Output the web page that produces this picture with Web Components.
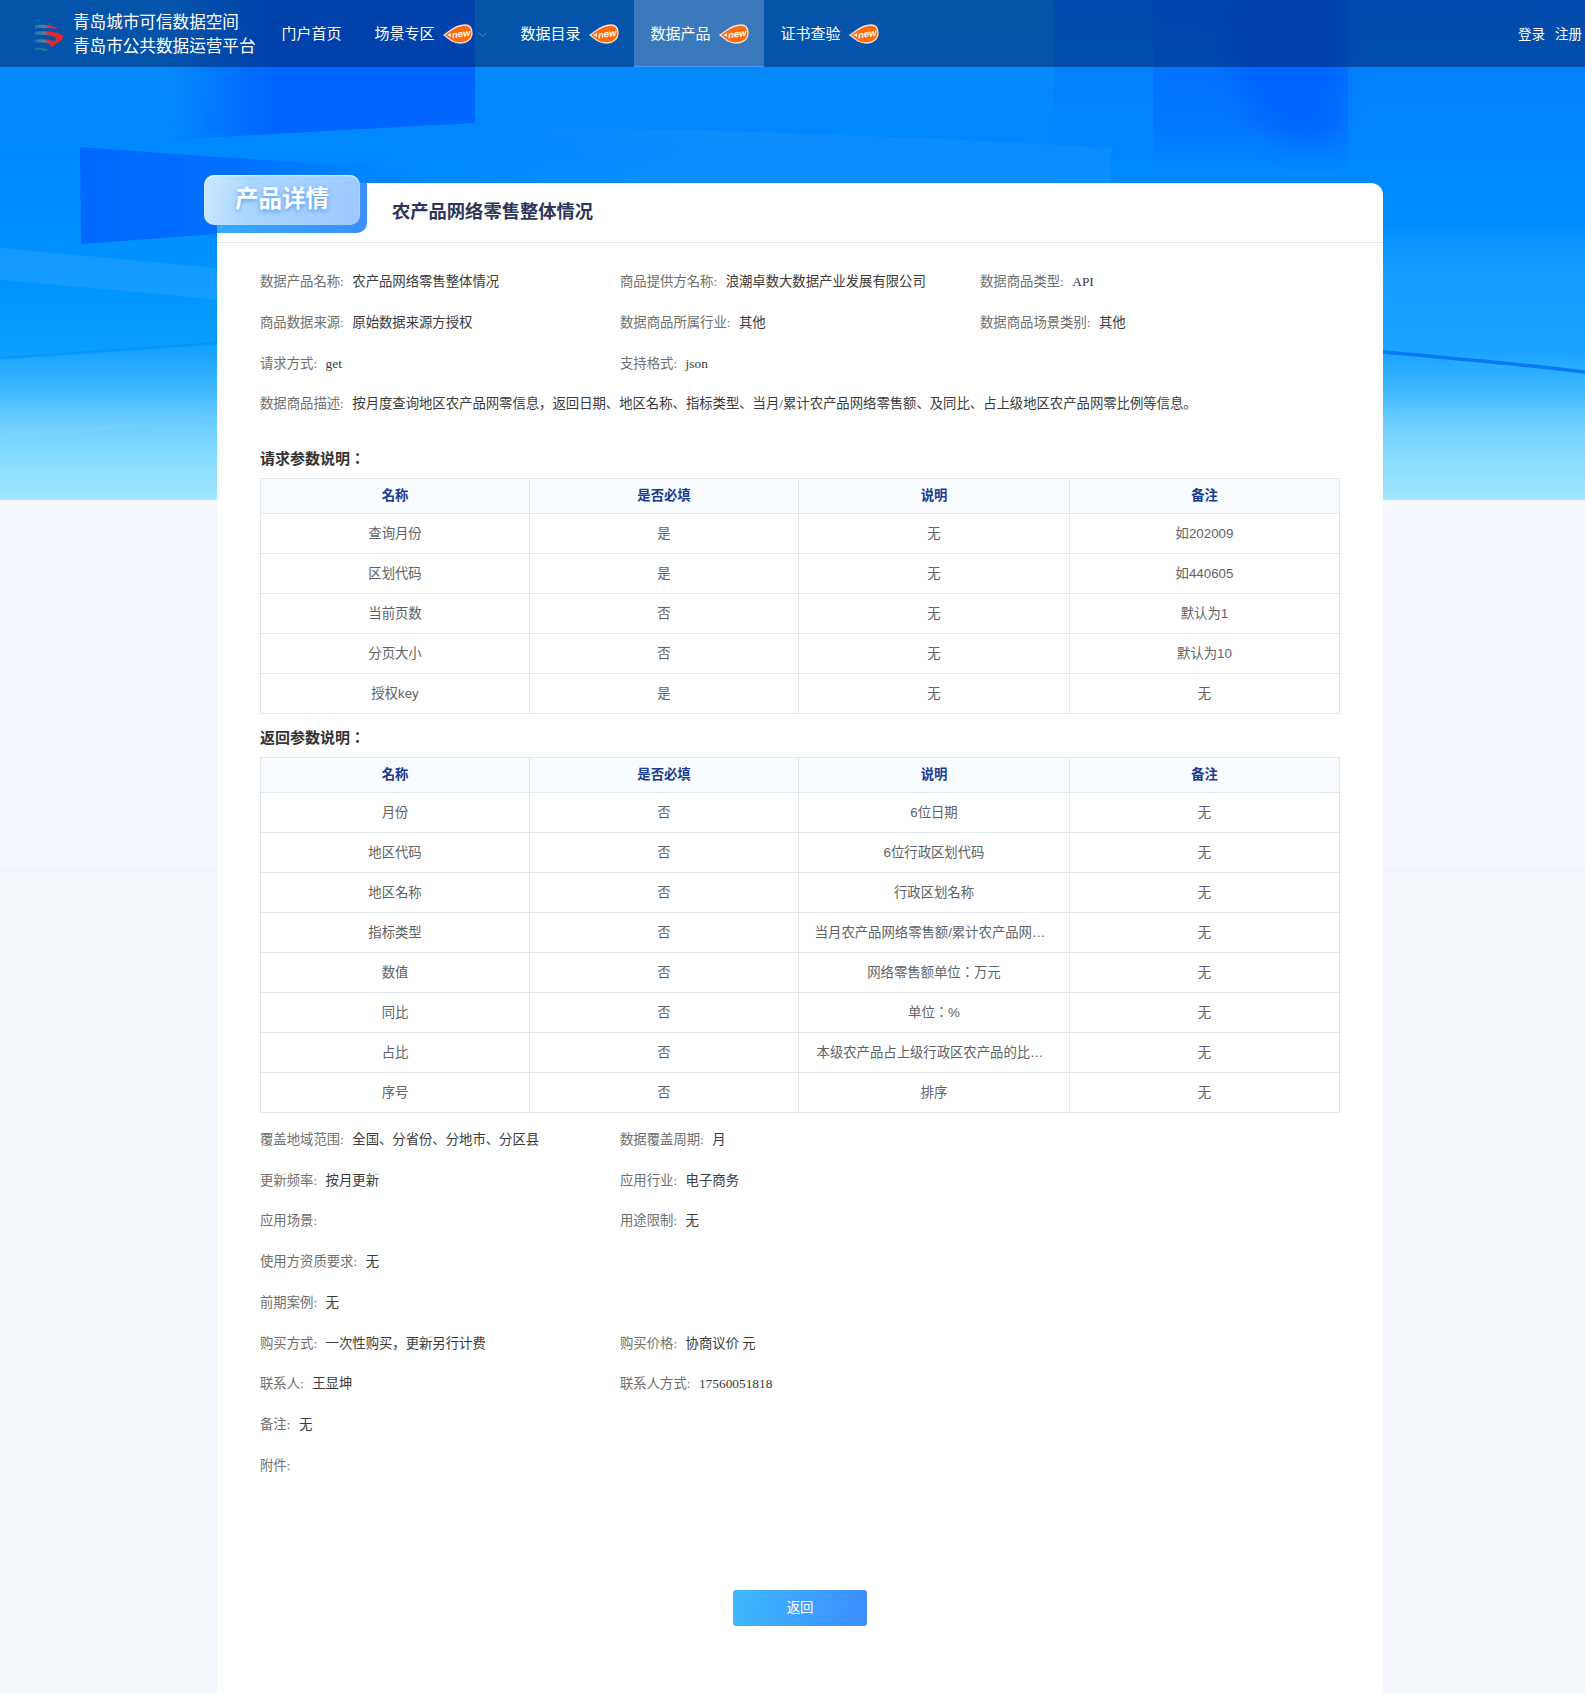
<!DOCTYPE html>
<html lang="ja">
<head>
<meta charset="utf-8">
<title>产品详情</title>
<style>
html,body{margin:0;padding:0;background:#f2f5f9;}
body{width:1585px;overflow-x:hidden;font-family:"Liberation Serif","Noto Sans CJK JP",serif;font-size:13.35px;}
</style>
</head>
<body>
<detail-page>
  <site-nav slot="nav">
    <nav-item>门户首页</nav-item>
    <nav-item badge chevron>场景专区</nav-item>
    <nav-item badge>数据目录</nav-item>
    <nav-item badge active>数据产品</nav-item>
    <nav-item badge>证书查验</nav-item>
  </site-nav>
  <detail-card tab="产品详情" heading="农产品网络零售整体情况">
    <info-grid>
      <info-field label="数据产品名称">农产品网络零售整体情况</info-field>
      <info-field label="商品提供方名称">浪潮卓数大数据产业发展有限公司</info-field>
      <info-field label="数据商品类型">API</info-field>
      <info-field label="商品数据来源">原始数据来源方授权</info-field>
      <info-field label="数据商品所属行业">其他</info-field>
      <info-field label="数据商品场景类别">其他</info-field>
      <info-field label="请求方式">get</info-field>
      <info-field label="支持格式">json</info-field>
      <info-field></info-field>
      <info-field wide label="数据商品描述">按月度查询地区农产品网零信息，返回日期、地区名称、指标类型、当月/累计农产品网络零售额、及同比、占上级地区农产品网零比例等信息。</info-field>
    </info-grid>
    <section-title first>请求参数说明：</section-title>
    <param-table>
      <param-row head><param-cell>名称</param-cell><param-cell>是否必填</param-cell><param-cell>说明</param-cell><param-cell>备注</param-cell></param-row>
      <param-row><param-cell>查询月份</param-cell><param-cell>是</param-cell><param-cell>无</param-cell><param-cell>如202009</param-cell></param-row>
      <param-row><param-cell>区划代码</param-cell><param-cell>是</param-cell><param-cell>无</param-cell><param-cell>如440605</param-cell></param-row>
      <param-row><param-cell>当前页数</param-cell><param-cell>否</param-cell><param-cell>无</param-cell><param-cell>默认为1</param-cell></param-row>
      <param-row><param-cell>分页大小</param-cell><param-cell>否</param-cell><param-cell>无</param-cell><param-cell>默认为10</param-cell></param-row>
      <param-row><param-cell>授权key</param-cell><param-cell>是</param-cell><param-cell>无</param-cell><param-cell>无</param-cell></param-row>
    </param-table>
    <section-title>返回参数说明：</section-title>
    <param-table>
      <param-row head><param-cell>名称</param-cell><param-cell>是否必填</param-cell><param-cell>说明</param-cell><param-cell>备注</param-cell></param-row>
      <param-row><param-cell>月份</param-cell><param-cell>否</param-cell><param-cell>6位日期</param-cell><param-cell>无</param-cell></param-row>
      <param-row><param-cell>地区代码</param-cell><param-cell>否</param-cell><param-cell>6位行政区划代码</param-cell><param-cell>无</param-cell></param-row>
      <param-row><param-cell>地区名称</param-cell><param-cell>否</param-cell><param-cell>行政区划名称</param-cell><param-cell>无</param-cell></param-row>
      <param-row><param-cell>指标类型</param-cell><param-cell>否</param-cell><param-cell clipped>当月农产品网络零售额/累计农产品网…</param-cell><param-cell>无</param-cell></param-row>
      <param-row><param-cell>数值</param-cell><param-cell>否</param-cell><param-cell>网络零售额单位：万元</param-cell><param-cell>无</param-cell></param-row>
      <param-row><param-cell>同比</param-cell><param-cell>否</param-cell><param-cell>单位：%</param-cell><param-cell>无</param-cell></param-row>
      <param-row><param-cell>占比</param-cell><param-cell>否</param-cell><param-cell clipped>本级农产品占上级行政区农产品的比…</param-cell><param-cell>无</param-cell></param-row>
      <param-row><param-cell>序号</param-cell><param-cell>否</param-cell><param-cell>排序</param-cell><param-cell>无</param-cell></param-row>
    </param-table>
    <info-grid after>
      <info-field label="覆盖地域范围">全国、分省份、分地市、分区县</info-field>
      <info-field label="数据覆盖周期">月</info-field>
      <info-field></info-field>
      <info-field label="更新频率">按月更新</info-field>
      <info-field label="应用行业">电子商务</info-field>
      <info-field></info-field>
      <info-field label="应用场景"></info-field>
      <info-field label="用途限制">无</info-field>
      <info-field></info-field>
      <info-field wide label="使用方资质要求">无</info-field>
      <info-field wide label="前期案例">无</info-field>
      <info-field label="购买方式">一次性购买，更新另行计费</info-field>
      <info-field label="购买价格">协商议价 元</info-field>
      <info-field></info-field>
      <info-field label="联系人">王显坤</info-field>
      <info-field label="联系人方式">17560051818</info-field>
      <info-field></info-field>
      <info-field wide label="备注">无</info-field>
      <info-field wide label="附件"></info-field>
    </info-grid>
    <back-button>返回</back-button>
  </detail-card>
</detail-page>

<script>
const CJK = '"Noto Sans CJK JP"';
function define(name, html, init) {
  customElements.define(name, class extends HTMLElement {
    constructor() {
      super();
      this.attachShadow({mode: 'open'}).innerHTML = typeof html === 'function' ? html(this) : html;
    }
    connectedCallback() { if (init) init(this); }
  });
}

define('detail-page', `
<style>
:host{display:block;position:relative;width:1585px;min-height:1693px;isolation:isolate;}
.backdrop{position:absolute;left:0;top:0;width:1585px;height:867px;z-index:-1;background:#f5f8fe;}
.backdrop svg{display:block;}
main{display:block;padding:116px 202px 0 217px;}
</style>
<div class="backdrop">
<svg width="1585" height="500" viewBox="0 0 1585 500" xmlns="http://www.w3.org/2000/svg">
  <defs>
    <linearGradient id="base" x1="0" y1="0" x2="0" y2="1">
      <stop offset="0" stop-color="#0a8af8"/>
      <stop offset=".3" stop-color="#0088ff"/>
      <stop offset=".56" stop-color="#0094ff"/>
      <stop offset=".7" stop-color="#0a9eff"/>
      <stop offset=".78" stop-color="#35b5ff"/>
      <stop offset=".855" stop-color="#6ecfff"/>
      <stop offset=".92" stop-color="#88dcff"/>
      <stop offset="1" stop-color="#a0e6ff"/>
    </linearGradient>
    <linearGradient id="rtint" x1="0" y1="0" x2="0" y2="1">
      <stop offset="0" stop-color="#0070ff" stop-opacity=".75"/>
      <stop offset=".45" stop-color="#0090ff" stop-opacity=".2"/>
      <stop offset=".6" stop-color="#ffffff" stop-opacity=".08"/>
      <stop offset="1" stop-color="#ffffff" stop-opacity="0"/>
    </linearGradient>
    <linearGradient id="strip" x1="0" y1="0" x2="0" y2="1">
      <stop offset="0" stop-color="#0062ff" stop-opacity=".5"/>
      <stop offset=".7" stop-color="#0062ff" stop-opacity=".4"/>
      <stop offset="1" stop-color="#0062ff" stop-opacity="0"/>
    </linearGradient>
    <linearGradient id="fadeL" x1="170" y1="0" x2="270" y2="0" gradientUnits="userSpaceOnUse">
      <stop offset="0" stop-color="#0066ff" stop-opacity="0"/>
      <stop offset="1" stop-color="#0066ff"/>
    </linearGradient>
    <linearGradient id="fadeB" x1="80" y1="0" x2="480" y2="0" gradientUnits="userSpaceOnUse">
      <stop offset="0" stop-color="#0068ff"/>
      <stop offset=".4" stop-color="#0070ff"/>
      <stop offset="1" stop-color="#0088ff" stop-opacity="0"/>
    </linearGradient>
    <linearGradient id="band" x1="380" y1="0" x2="700" y2="0" gradientUnits="userSpaceOnUse">
      <stop offset="0" stop-color="#fff" stop-opacity="0"/>
      <stop offset="1" stop-color="#fff" stop-opacity=".045"/>
    </linearGradient>
    <filter id="blur" x="-20%" y="-20%" width="140%" height="140%"><feGaussianBlur stdDeviation="12"/></filter>
  </defs>
  <rect width="1585" height="500" fill="url(#base)"/>
  <rect x="1054" width="531" height="500" fill="url(#rtint)"/>
  <polygon points="170,0 475,0 475,123 200,138 170,139" fill="url(#fadeL)"/>
  <polygon points="80,147 217,157 367,166 480,172 480,232 217,234 81,244" fill="url(#fadeB)"/>
  <path d="M380,125 C700,128 950,138 1111,148 L1111,183 L380,183Z" fill="url(#band)"/>
  <polygon points="0,248 217,268 217,300 160,294 0,280" fill="#fff" fill-opacity=".08"/>
  <rect x="1153" width="195" height="175" fill="url(#strip)"/>
  <path d="M1225,0 H1340 V120 C1335,150 1300,150 1270,130 C1245,112 1230,80 1225,0Z" fill="#005eff" fill-opacity=".7" filter="url(#blur)"/>
  <path d="M0,358 L217,343" stroke="#0a8cf5" stroke-width="2" fill="none" stroke-opacity=".6"/>
  <path d="M1383,352 C1450,358 1520,364 1585,372" stroke="#0a78f5" stroke-width="3.5" fill="none"/>
  <polygon points="0,360 217,345 217,420 0,440" fill="#fff" fill-opacity=".05"/>
</svg>
</div>
<slot name="nav"></slot>
<main><slot></slot></main>
`);

define('site-nav', `
<style>
:host{display:flex;align-items:center;height:67px;width:1585px;box-sizing:border-box;background:rgba(0,30,90,.5);color:#fff;font-family:${CJK},sans-serif;}
.brand{display:flex;align-items:center;width:264.5px;flex:none;padding-left:33px;box-sizing:border-box;height:100%;}
.brand svg{display:block;flex:none;margin-right:8px;}
.name{font-size:16.6px;line-height:24px;white-space:nowrap;margin-top:-1px;}
.items{display:flex;height:100%;}
.user{margin-left:auto;display:flex;gap:10px;font-size:13.5px;padding-right:3px;padding-bottom:2px;}
</style>
<div class="brand">
  <svg width="32" height="36" viewBox="33 14 32 36" xmlns="http://www.w3.org/2000/svg">
    <defs>
      <linearGradient id="rb" x1="35" y1="0" x2="50" y2="0" gradientUnits="userSpaceOnUse">
        <stop offset="0" stop-color="#1f9f98" stop-opacity=".5"/>
        <stop offset=".55" stop-color="#5a7fa0"/>
        <stop offset="1" stop-color="#e6282a"/>
      </linearGradient>
    </defs>
    <path d="M35 18 C38 17.4 41 17.8 43 19.2 C40.5 18.6 38 18.7 35 19Z" fill="#1d8a86" fill-opacity=".7"/>
    <path d="M35 23 C44 22.4 54 23 58.5 27.5 C54 25.8 45 25.6 35 26.4Z" fill="url(#rb)"/>
    <path d="M35 29.5 C47 28.8 60 29.5 63.5 34.8 C62 38.5 58 41 53 42.8 C56 39.5 57 37 54.5 35 C50 32.8 43 32.6 35 32.8Z" fill="url(#rb)"/>
    <path d="M35 37.5 C42 37 49 37.6 56.5 39.5 C55.5 42 54 44 51 45.4 C51 43 49 41.6 46 41 C42.5 40.4 39 40.4 35 40.5Z" fill="url(#rb)"/>
    <path d="M35 45.8 C39 45.4 44 46 48.5 47.8 C47 48.8 45.5 49 44 49 C43 47.6 39 47.4 35 47.5Z" fill="#1d8a86" fill-opacity=".8"/>
  </svg>
  <div class="name">青岛城市可信数据空间<br>青岛市公共数据运营平台</div>
</div>
<div class="items"><slot></slot></div>
<div class="user"><span>登录</span><span>注册</span></div>
`);

define('nav-item', el => {
  const badge = el.hasAttribute('badge') ? `
  <svg class="badge" width="30" height="20" viewBox="0 0 30 20" xmlns="http://www.w3.org/2000/svg">
    <path d="M1 11 C6 8 12 1 22 1 C26.5 1 29 4 29 9 C29 15 24 19 17 19 C10 19 6 15 1 11Z" fill="#ff6a0a" stroke="#f5e3d6" stroke-width="1.3"/>
    <path d="M4.5 11 L8 9 V13Z" fill="#fff"/>
    <text x="9" y="13.2" font-family="Liberation Sans,sans-serif" font-size="9.5" font-weight="700" font-style="italic" fill="#fff" transform="rotate(-8 18 10)">new</text>
  </svg>` : '';
  const chev = el.hasAttribute('chevron') ? `
  <svg class="chev" width="9" height="6" viewBox="0 0 9 6" xmlns="http://www.w3.org/2000/svg"><path d="M.7 .8 L4.5 4.6 L8.3 .8" fill="none" stroke="#4a80c4" stroke-width="1"/></svg>` : '';
  return `
<style>
:host{display:flex;align-items:center;height:67px;box-sizing:border-box;padding:0 16px 3px 17px;font-size:15px;white-space:nowrap;}
:host([badge]){padding-right:15px;}
:host([active]){background:rgba(255,255,255,.22);border-bottom:1px solid #4a97ff;padding-bottom:2px;}
:host([chevron]){padding-right:17px;}
.badge{display:block;margin-left:8px;margin-top:3px;flex:none;}
.chev{display:block;margin-left:5px;margin-top:5px;flex:none;}
</style><slot></slot>${badge}${chev}`;
});

define('detail-card', el => `
<style>
:host{display:block;position:relative;width:1166px;box-sizing:border-box;background:#fff;border-radius:12px 12px 0 0;min-height:1510px;}
.head{height:60px;box-sizing:border-box;border-bottom:1px solid #e8e8e8;display:flex;align-items:center;padding:0 0 5px 175px;}
h1{margin:0;font:700 18.3px/24px ${CJK},sans-serif;color:#2d3658;}
.tabback{position:absolute;left:0;top:0;width:150px;height:50px;background:linear-gradient(90deg,#35aaff,#3d8fff);border-radius:0 0 10px 0;}
.tab{position:absolute;left:-13px;top:-8px;width:156px;height:50px;box-sizing:border-box;border-radius:10px;padding-bottom:4px;background:linear-gradient(100deg,#cdeaff 0%,#a9d6ff 30%,#9cc8ff 100%);box-shadow:inset 0 1px 2px rgba(255,255,255,.7);display:flex;align-items:center;justify-content:center;color:#fff;font:700 23.5px/1 ${CJK},sans-serif;text-shadow:0 2px 4px rgba(30,110,220,.55);}
.body{padding:19px 43px 67px 43px;}
</style>
<div class="tabback"></div>
<div class="tab">${el.getAttribute('tab')}</div>
<div class="head"><h1>${el.getAttribute('heading')}</h1></div>
<div class="body"><slot></slot></div>
`);

define('info-grid', `
<style>
:host{display:grid;grid-template-columns:360px 360px 360px;grid-auto-rows:40.7px;}
:host([after]){margin-top:7px;}
</style><slot></slot>
`);

define('info-field', el => `
<style>
:host{display:flex;align-items:center;white-space:nowrap;font:13.35px/20px "Liberation Serif",${CJK},serif;color:#3a3a3a;min-width:0;}
:host([wide]){grid-column:1 / -1;}
.l{color:#6f6f6f;margin-right:8.5px;}
</style>${el.hasAttribute('label') ? `<span class="l">${el.getAttribute('label')}:</span>` : ''}<span><slot></slot></span>
`);

define('section-title', `
<style>
:host{display:block;font:700 15px/21px ${CJK},sans-serif;color:#333;margin:12px 0 10px;}
:host([first]){margin:22px 0 10px;}
</style><slot></slot>
`);

define('param-table', `
<style>
:host{display:block;width:1080px;box-sizing:border-box;border:1px solid #e3e7ee;border-bottom:0;}
</style><slot></slot>
`);

define('param-row', `
<style>
:host{display:grid;grid-template-columns:269px 269px 271px 1fr;height:40px;box-sizing:border-box;border-bottom:1px solid #e3e7ee;font:13.35px/20px "Liberation Sans",${CJK},sans-serif;color:#606266;}
:host([head]){height:35px;background:#f8fbff;color:#1c3a8f;font-weight:700;}
</style><slot></slot>
`);

define('param-cell', `
<style>
:host{display:flex;align-items:center;justify-content:center;box-sizing:border-box;padding-top:1px;border-right:1px solid #e3e7ee;white-space:nowrap;overflow:hidden;min-width:0;}
:host(:last-child){border-right:0;}
:host([clipped]){padding-right:8px;}
</style><slot></slot>
`);

define('back-button', `
<style>
:host{display:flex;align-items:center;justify-content:center;width:134px;height:36px;margin:104px auto 0;padding-bottom:2px;box-sizing:border-box;border-radius:3px;background:linear-gradient(100deg,#3fb8ff,#3d8dff);color:#fff;font:13.35px/20px ${CJK},sans-serif;}
</style><slot></slot>
`);
</script>
</body>
</html>
